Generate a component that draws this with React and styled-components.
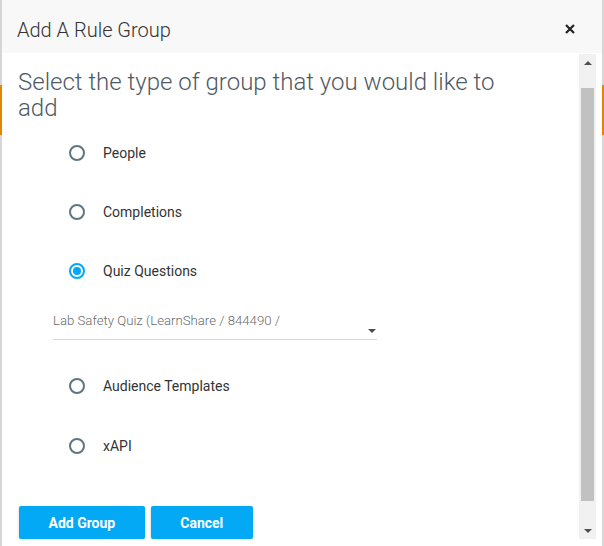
import styled, { createGlobalStyle } from "styled-components";

const GlobalStyle = createGlobalStyle`
  html, body {
    margin: 0;
    padding: 0;
  }
  body {
    font-family: Roboto, "Noto Sans", sans-serif;
    background: linear-gradient(
      to bottom,
      #d6d6d6 0px,
      #d6d6d6 85px,
      #e08600 85px,
      #e08600 135px,
      #d6d6d6 135px
    );
    height: 546px;
    overflow: hidden;
  }
`;

const Dialog = styled.div`
  width: 600px;
  height: 546px;
  margin: 0 auto;
  background: #fff;
  display: flex;
  flex-direction: column;
`;

const Header = styled.div`
  height: 53px;
  flex-shrink: 0;
  background: #f8f8f8;
  display: flex;
  align-items: center;
  justify-content: space-between;
  padding: 7px 27px 0 15px;
  box-sizing: border-box;
`;

const Title = styled.h2`
  margin: 0;
  font-size: 20px;
  font-weight: 300;
  color: #333;
`;

const Close = styled.button`
  border: none;
  background: none;
  padding: 0;
  width: 10px;
  height: 10px;
  display: flex;
  margin-top: -3px;
  cursor: pointer;
`;

const Body = styled.div`
  flex: 1;
  display: flex;
  padding: 1px 6px 7px 0;
  min-height: 0;
`;

const Content = styled.div`
  flex: 1;
  padding-left: 16px;
  overflow: hidden;
`;

const Heading = styled.h1`
  margin: 15px 0 0;
  max-width: 500px;
  font-size: 24px;
  line-height: 26px;
  font-weight: 300;
  color: #4f5a63;
`;

const Options = styled.div`
  margin-top: 2px;
  padding-left: 51px;
`;

const OptionRow = styled.label`
  height: ${(p) => p.$h}px;
  display: flex;
  align-items: center;
  gap: 18px;
  font-size: 14px;
  color: #333;
  cursor: pointer;
`;

const Radio = styled.span`
  width: 16px;
  height: 16px;
  box-sizing: border-box;
  border-radius: 50%;
  border: 2px solid ${(p) => (p.$on ? "#03a9f4" : "#5f7581")};
  display: flex;
  align-items: center;
  justify-content: center;
  flex-shrink: 0;
  &::after {
    content: "";
    display: ${(p) => (p.$on ? "block" : "none")};
    width: 8px;
    height: 8px;
    border-radius: 50%;
    background: #03a9f4;
  }
`;

const SelectBox = styled.div`
  width: 324px;
  margin-left: -16px;
  height: 40px;
  box-sizing: border-box;
  border-bottom: 1px solid #d3d8db;
  position: relative;
  padding-top: 13px;
  font-size: 13.2px;
  font-weight: 300;
  color: #6b6b6b;
  margin-bottom: 16px;
`;

const Caret = styled.span`
  position: absolute;
  right: 1px;
  top: 29px;
  width: 0;
  height: 0;
  border-left: 4px solid transparent;
  border-right: 4px solid transparent;
  border-top: 4px solid #4a4a4a;
`;

const Actions = styled.div`
  display: flex;
  gap: 6px;
  margin-top: 30px;
  margin-left: 1px;
`;

const Button = styled.button`
  height: 33px;
  padding: 0 29.5px;
  border: none;
  border-radius: 2px;
  background: #03a9f4;
  color: #fff;
  font-family: Roboto, sans-serif;
  font-size: 14px;
  font-weight: 700;
  box-shadow: 0 1px 3px rgba(0, 0, 0, 0.2);
  cursor: pointer;
`;

const ScrollTrack = styled.div`
  width: 17px;
  background: #f1f1f1;
  display: flex;
  flex-direction: column;
  flex-shrink: 0;
`;

const ScrollArrow = styled.div`
  height: 17px;
  display: flex;
  align-items: center;
  justify-content: center;
  &::after {
    content: "";
    border-left: 4px solid transparent;
    border-right: 4px solid transparent;
    ${(p) =>
      p.$down
        ? "border-top: 4px solid #505050;"
        : "border-bottom: 4px solid #505050;"}
  }
`;

const Rail = styled.div`
  flex: 1;
  padding: 17px 2px 21px;
  display: flex;
`;

const Thumb = styled.div`
  flex: 1;
  background: #c1c1c1;
`;

const options = [
  { label: "People", h: 59 },
  { label: "Completions", h: 59 },
  { label: "Quiz Questions", h: 59, on: true },
];

const more = [
  { label: "Audience Templates", h: 60 },
  { label: "xAPI", h: 60 },
];

const App = () => {
  return (
    <>
      <GlobalStyle />
      <Dialog>
        <Header>
          <Title>Add A Rule Group</Title>
          <Close aria-label="Close">
            <svg width="10" height="10" viewBox="0 0 10 10">
              <path d="M1 1L9 9M9 1L1 9" stroke="#222" strokeWidth="2.2" />
            </svg>
          </Close>
        </Header>
        <Body>
          <Content>
            <Heading>Select the type of group that you would like to add</Heading>
            <Options>
              {options.map((o) => (
                <OptionRow key={o.label} $h={o.h}>
                  <Radio $on={o.on} />
                  {o.label}
                </OptionRow>
              ))}
              <SelectBox>
                Lab Safety Quiz (LearnShare / 844490 /
                <Caret />
              </SelectBox>
              {more.map((o) => (
                <OptionRow key={o.label} $h={o.h}>
                  <Radio $on={o.on} />
                  {o.label}
                </OptionRow>
              ))}
            </Options>
            <Actions>
              <Button>Add Group</Button>
              <Button>Cancel</Button>
            </Actions>
          </Content>
          <ScrollTrack>
            <ScrollArrow />
            <Rail>
              <Thumb />
            </Rail>
            <ScrollArrow $down />
          </ScrollTrack>
        </Body>
      </Dialog>
    </>
  );
};

export default App;
